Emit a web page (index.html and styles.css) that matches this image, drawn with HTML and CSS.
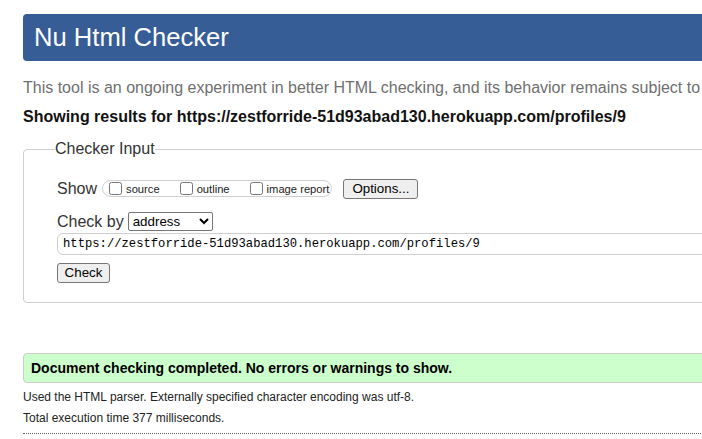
FILE: index.html
```html
<!DOCTYPE html>
<html lang="en">
<head>
<meta charset="utf-8">
<title>Showing results for https://zestforride-51d93abad130.herokuapp.com/profiles/9 - Nu Html Checker</title>
<link rel="stylesheet" href="styles.css">
</head>
<body>
<div class="page">
  <h1 class="title">Nu Html Checker</h1>
  <p class="intro">This tool is an ongoing experiment in better HTML checking, and its behavior remains subject to change</p>
  <p class="results-for">Showing results for https://zestforride-51d93abad130.herokuapp.com/profiles/9</p>
  <form class="checker-form" onsubmit="return false">
    <fieldset class="checker">
      <legend class="legend">Checker Input</legend>
      <div class="row show-row">
        <span class="label">Show</span>
        <span class="options-group">
          <label class="opt"><input type="checkbox" class="cb"><span>source</span></label>
          <label class="opt"><input type="checkbox" class="cb"><span>outline</span></label>
          <label class="opt"><input type="checkbox" class="cb"><span>image report</span></label>
        </span>
        <button type="button" class="btn options-btn">Options...</button>
      </div>
      <div class="row checkby-row">
        <label class="label" for="docselect">Check by</label>
        <select id="docselect" class="docselect"><option>address</option><option>file upload</option><option>text input</option></select>
      </div>
      <div class="row url-row">
        <input class="url" type="text" value="https://zestforride-51d93abad130.herokuapp.com/profiles/9">
      </div>
      <div class="row submit-row">
        <button type="button" class="btn check-btn">Check</button>
      </div>
    </fieldset>
  </form>
  <p class="success">Document checking completed. No errors or warnings to show.</p>
  <p class="meta">Used the HTML parser. Externally specified character encoding was utf-8.</p>
  <p class="meta meta-time">Total execution time 377 milliseconds.</p>
  <hr class="dotted">
</div>
</body>
</html>
```
FILE: styles.css
```css
html, body {
  overflow: hidden;
}
body {
  margin: 0;
  padding: 14px 0 0 23px;
  background: #fff;
  font-family: "Liberation Sans", Arial, sans-serif;
  color: #222;
}
.page {
  width: 900px;
}
.title {
  margin: 0;
  height: 47px;
  line-height: 47px;
  padding-left: 11px;
  background: #365d95;
  color: #fff;
  border-radius: 4px;
  font-size: 25.6px;
  font-weight: normal;
}
.intro {
  margin: 17px 0 0;
  font-size: 16px;
  line-height: 20px;
  color: #6f6f6f;
  white-space: nowrap;
}
.results-for {
  margin: 9px 0 0;
  font-size: 16px;
  line-height: 20px;
  font-weight: bold;
  color: #111;
}
.checker-form {
  margin: 0;
}
.checker {
  margin: 12px 0 0;
  padding: 19px 0 19px 33px;
  border: 1px solid #cfcfcf;
  border-radius: 4px;
}
.legend {
  margin-left: -2px;
  padding: 0;
  font-size: 16px;
  line-height: 20px;
  color: #333;
}
.row {
  display: flex;
  align-items: center;
}
.label {
  font-size: 16px;
  line-height: 20px;
  color: #333;
}
.show-row {
  height: 21px;
}
.options-group {
  display: inline-flex;
  align-items: center;
  height: 17px;
  box-sizing: border-box;
  margin-left: 5px;
  padding: 0 2px;
  border: 1px solid #cfcfcf;
  border-radius: 9px;
}
.opt {
  display: inline-flex;
  align-items: center;
  font-size: 11.2px;
  color: #222;
  margin-right: 16px;
}
.opt:last-child {
  margin-right: 0;
}
.cb {
  width: 13px;
  height: 13px;
  margin: 0 4px 0 4px;
}
.btn {
  box-sizing: border-box;
  height: 20px;
  padding: 0 7px;
  border: 1px solid #767676;
  border-radius: 3px;
  background: #efefef;
  color: #000;
  font-family: "Liberation Sans", Arial, sans-serif;
  font-size: 13.33px;
  line-height: 18px;
}
.options-btn {
  margin-left: 11px;
  width: 75px;
  padding: 0;
}
.checkby-row {
  margin-top: 13px;
  height: 19px;
}
.docselect {
  margin-left: 4px;
  width: 85px;
  height: 19px;
  box-sizing: border-box;
  font-family: "Liberation Sans", Arial, sans-serif;
  font-size: 13.33px;
  color: #000;
  border: 1px solid #767676;
  border-radius: 2px;
  background: #fff;
}
.url-row {
  margin-top: 2px;
}
.url {
  box-sizing: border-box;
  width: 100%;
  height: 22px;
  margin: 0;
  padding: 0 5px;
  border: 1px solid #cfcfcf;
  border-radius: 6px;
  font-family: "Liberation Mono", monospace;
  font-size: 12.2px;
  color: #000;
  background: #fff;
}
.submit-row {
  margin-top: 8px;
}
.check-btn {
  width: 53px;
  padding: 0;
}
.success {
  margin: 50px 0 0;
  height: 30px;
  box-sizing: border-box;
  padding: 0 7px;
  line-height: 28px;
  background: #ccffcc;
  border: 1px solid #cccccc;
  border-radius: 4px;
  font-size: 14px;
  font-weight: bold;
  color: #000;
}
.meta {
  margin: 6px 0 0;
  font-size: 12px;
  line-height: 16px;
  color: #222;
}
.meta-time {
  margin-top: 5px;
}
.dotted {
  margin: 7px 0 0;
  height: 0;
  border: 0;
  border-top: 1px dotted #666;
}
```
